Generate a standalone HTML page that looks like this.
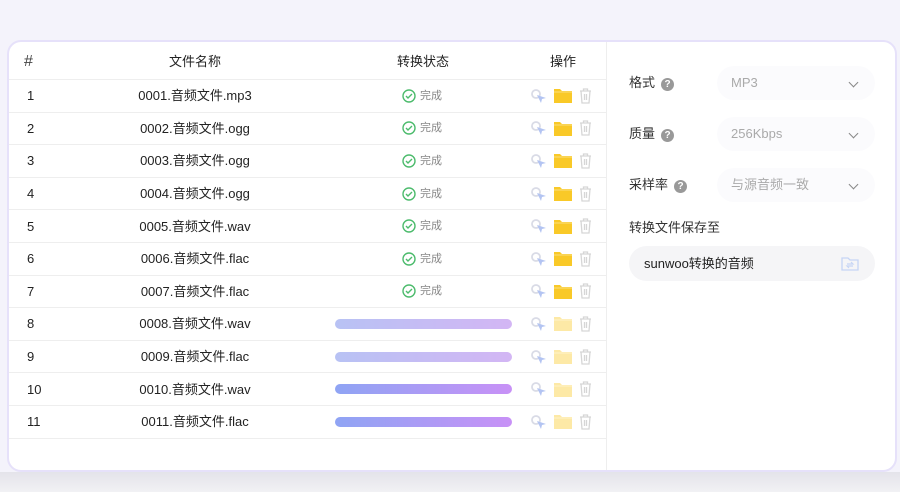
<!DOCTYPE html><html><head><meta charset="utf-8"><style>
*{margin:0;padding:0;box-sizing:border-box}
body{width:900px;height:492px;overflow:hidden;background:#f4f3fb;font-family:"Liberation Sans","Noto Sans CJK SC",sans-serif;color:#333;position:relative}
.bot{position:absolute;left:0;top:472px;width:900px;height:20px;background:linear-gradient(#e4e3ea,#f1f1f4)}
.card{position:absolute;left:7px;top:40px;width:890px;height:432px;background:#fff;border:2px solid #e6e1fa;border-radius:14px;overflow:hidden}
.tbl{position:absolute;left:0;top:0;width:598px;height:430px;border-right:1px solid #eee}
.row{position:absolute;left:0;width:598px;height:32.6px;border-bottom:1px solid #eee;font-size:13px;color:#222}
.c{position:absolute;top:0;height:100%;display:flex;align-items:center;white-space:nowrap;line-height:16px}
.n{left:18px;padding-top:1px}.f{left:86px;width:200px;justify-content:center;padding-top:1px}
.st{left:393px;font-size:11px;color:#888;gap:4px}
.bar{position:absolute;left:326px;top:50%;margin-top:-5px;width:177px;height:10px;border-radius:5px}
.ops{left:521px;gap:7px}
.side{position:absolute;left:620px;font-size:13px;color:#333;line-height:16px}
.sel{position:absolute;left:708px;width:158px;height:34px;border-radius:17px;background:#fbfbfd;font-size:13px;color:#aaa;padding:0 14px;line-height:34px}
.sel:after{content:"";position:absolute;right:18px;top:13px;width:6px;height:6px;border-right:1.5px solid #888;border-bottom:1.5px solid #888;transform:rotate(45deg)}
.q{display:inline-block;width:13px;height:13px;border-radius:50%;background:#999;color:#fff;font-size:10px;text-align:center;line-height:13px;margin-left:6px;vertical-align:0;font-weight:bold}
</style></head><body>
<div class="card">
<div class="tbl">
<div class="row" style="top:0;height:38px"><span class="c n" style="left:15px;font-size:16px;color:#444;padding-top:2px">#</span><span class="c f" style="padding-top:2px">文件名称</span><span class="c" style="left:388px;padding-top:2px">转换状态</span><span class="c" style="left:541px;padding-top:2px">操作</span></div>
</div>
<div class="side" style="top:33px">格式<span class="q">?</span></div>
<div class="sel" style="top:24px">MP3</div>
<div class="side" style="top:84px">质量<span class="q">?</span></div>
<div class="sel" style="top:75px">256Kbps</div>
<div class="side" style="top:135px">采样率<span class="q">?</span></div>
<div class="sel" style="top:126px">与源音频一致</div>
<div class="side" style="top:178px">转换文件保存至</div>
<div style="position:absolute;left:620px;top:204px;width:246px;height:35px;border-radius:18px;background:#f5f5f7;font-size:13px;color:#222;padding:0 15px;line-height:35px">sunwoo转换的音频
<svg style="position:absolute;right:16px;top:10px" width="18" height="15" viewBox="0 0 18 15"><path d="M1 2h6l2 2h8v10H1z" fill="none" stroke="#c6d5f5" stroke-width="1.3"/><path d="M6 8h6l-2-2M12 10H6l2 2" fill="none" stroke="#c6d5f5" stroke-width="1.2"/></svg></div>
</div>
<div class="bot"></div>
<script>
const names=["0001.音频文件.mp3","0002.音频文件.ogg","0003.音频文件.ogg","0004.音频文件.ogg","0005.音频文件.wav","0006.音频文件.flac","0007.音频文件.flac","0008.音频文件.wav","0009.音频文件.flac","0010.音频文件.wav","0011.音频文件.flac"];
let h="";
names.forEach((n,i)=>{
const top=38+i*32.6;
const done=i<7;
const st=done?`<span class="c st"><svg width="14" height="14" viewBox="0 0 14 14"><circle cx="7" cy="7" r="6" fill="none" stroke="#4cbb6c" stroke-width="1.4"/><path d="M4 7l2 2 4-4" fill="none" stroke="#4cbb6c" stroke-width="1.4"/></svg>完成</span>`:
`<div class="bar" style="background:linear-gradient(90deg,${i<9?'#b8c2f4,#d3b6f4':'#8fa4f4,#c891f6'})"></div>`;
const fo=done?'#f9c928':'#fde9a6';
h+=`<div class="row" style="top:${top}px"><span class="c n">${i+1}</span><span class="c f">${n}</span>${st}
<div class="c ops"><svg width="17" height="16" viewBox="0 0 17 16"><circle cx="6" cy="6" r="4" fill="none" stroke="#d9dbe6" stroke-width="1.8"/><path d="M7 7l9 3-4 1-1 4z" fill="#b3c4f2"/></svg>
<svg width="18" height="15" viewBox="0 0 18 15"><path d="M0 1h6l2 2h10v12H0z" fill="${fo}"/><path d="M0 4h18" stroke="#fff" stroke-opacity=".4"/></svg>
<svg width="13" height="16" viewBox="0 0 13 16"><path d="M1 3h11M4.5 3V1h4v2M2 3l1 12h7l1-12M5.5 6v6M7.5 6v6" fill="none" stroke="#d6d6d6" stroke-width="1.3"/></svg></div></div>`;
});
document.querySelector('.tbl').insertAdjacentHTML('beforeend',h);
</script>
</body></html>
